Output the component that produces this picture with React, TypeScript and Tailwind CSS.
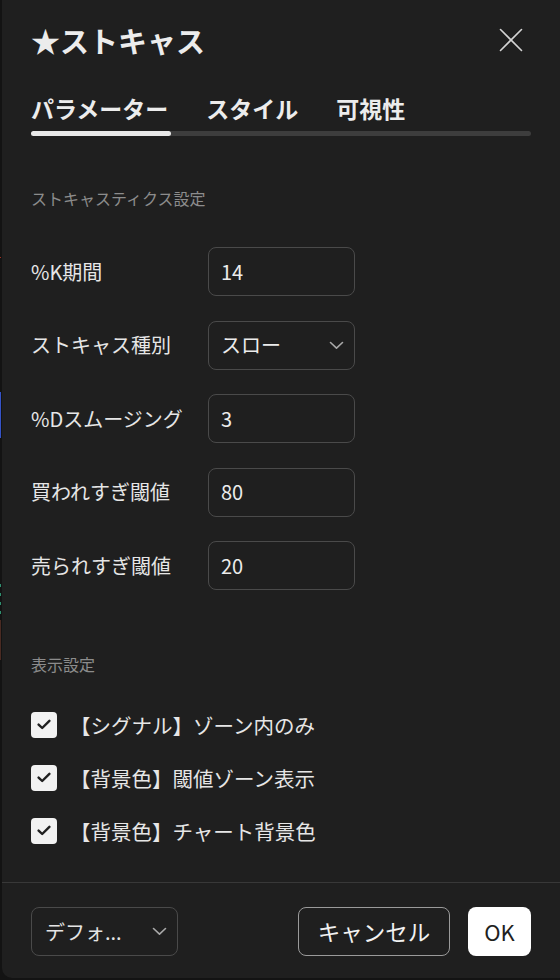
import React from "react";

const Chevron = ({ className = "" }: { className?: string }) => (
  <svg width="15" height="9" viewBox="0 0 15 9" className={className} fill="none">
    <path d="M1.5 1.5 L7.5 7.2 L13.5 1.5" stroke="#a8a8a8" strokeWidth="1.6" strokeLinecap="round" strokeLinejoin="round" />
  </svg>
);

const CheckBox = () => (
  <div className="w-[26px] h-[26px] rounded-[4px] bg-[#f2f2f2] flex items-center justify-center shrink-0">
    <svg width="14" height="11" viewBox="0 0 14 11" fill="none">
      <path d="M1.6 5.6 L5.2 9 L12.4 1.8" stroke="#202020" strokeWidth="2.4" strokeLinecap="round" strokeLinejoin="round" />
    </svg>
  </div>
);

const rows: { label: string; value: string; select?: boolean }[] = [
  { label: "%K期間", value: "14" },
  { label: "ストキャス種別", value: "スロー", select: true },
  { label: "%Dスムージング", value: "3" },
  { label: "買われすぎ閾値", value: "80" },
  { label: "売られすぎ閾値", value: "20" },
];

const checks = ["【シグナル】ゾーン内のみ", "【背景色】閾値ゾーン表示", "【背景色】チャート背景色"];

export default function App() {
  return (
    <div className="w-[560px] h-[980px] bg-[#131313] flex font-['Noto_Sans_CJK_JP','Noto_Sans',sans-serif] overflow-hidden">
      <div className="relative w-[2px] shrink-0">
        <div className="absolute left-0 top-[257px] w-[1px] h-[1px] bg-[#a03020]" />
        <div className="absolute left-0 top-[392px] w-[1px] h-[46px] bg-[#3553c8]" />
        <div className="absolute left-0 top-[584px] w-[1px] h-[3px] bg-[#2f8f6f]" />
        <div className="absolute left-0 top-[593px] w-[1px] h-[3px] bg-[#2f8f6f]" />
        <div className="absolute left-0 top-[602px] w-[1px] h-[3px] bg-[#2f8f6f]" />
        <div className="absolute left-0 top-[611px] w-[1px] h-[3px] bg-[#2f8f6f]" />
        <div className="absolute left-0 top-[620px] w-[1px] h-[40px] bg-[#4a2a22]" />
      </div>
      <div className="flex-1 h-[978px] bg-[#1f1f1f] rounded-bl-[10px] flex flex-col">
        <div className="px-[29px] flex flex-col">
          <div className="pt-[20px] h-[60px] flex items-center justify-between">
            <div className="text-[29px] leading-[40px] font-bold text-[#ececec]">★ストキャス</div>
            <svg width="24" height="24" viewBox="0 0 24 24" className="mr-[8px]" fill="none">
              <path d="M1.5 1.5 L22.5 22.5 M22.5 1.5 L1.5 22.5" stroke="#d4d4d4" strokeWidth="1.6" strokeLinecap="round" />
            </svg>
          </div>
          <div className="mt-[32px] flex gap-[38px] text-[23px] leading-[32px] font-bold text-[#ececec]">
            <span>パラメーター</span>
            <span>スタイル</span>
            <span>可視性</span>
          </div>
          <div className="mt-[7px] h-[5px] rounded-full bg-[#3d3d3d] flex">
            <div className="w-[140px] h-[5px] rounded-full bg-[#e8e8e8]" />
          </div>
          <div className="mt-[50px] text-[16px] leading-[24px] text-[#8c8c8c]">ストキャスティクス設定</div>
          <div className="mt-[37px] flex flex-col gap-[24.5px]">
            {rows.map((r) => (
              <div key={r.label} className="flex items-center">
                <div className="w-[177px] text-[20px] text-[#e6e6e6] leading-[28px]">{r.label}</div>
                <div className="w-[147px] h-[49px] rounded-[8px] border border-[#4a4a4a] flex items-center justify-between pl-[12px] pr-[10px]">
                  <span className="text-[20px] text-[#ececec] leading-[28px]">{r.value}</span>
                  {r.select && <Chevron />}
                </div>
              </div>
            ))}
          </div>
          <div className="mt-[62px] text-[16px] leading-[24px] text-[#8c8c8c]">表示設定</div>
          <div className="mt-[35.5px] flex flex-col gap-[27px]">
            {checks.map((c) => (
              <div key={c} className="flex items-center h-[26px] gap-[13px]">
                <CheckBox />
                <span className="text-[20.5px] leading-[28px] text-[#e6e6e6]">{c}</span>
              </div>
            ))}
          </div>
        </div>
        <div className="mt-auto border-t border-[#383838] pt-[24px] pb-[22px] px-[29px] flex items-center">
          <div className="w-[147px] h-[49px] rounded-[8px] border border-[#4a4a4a] flex items-center justify-between pl-[13px] pr-[10px]">
            <span className="text-[20px] leading-[28px] text-[#e4e4e4]">デフォ...</span>
            <Chevron />
          </div>
          <div className="ml-auto w-[152px] h-[49px] rounded-[8px] border border-[#9a9a9a] flex items-center justify-center text-[22.5px] text-[#f2f2f2]">
            キャンセル
          </div>
          <div className="ml-[18px] w-[63px] h-[49px] rounded-[8px] bg-white flex items-center justify-center text-[22px] text-[#1f1f1f]">
            OK
          </div>
        </div>
      </div>
    </div>
  );
}
